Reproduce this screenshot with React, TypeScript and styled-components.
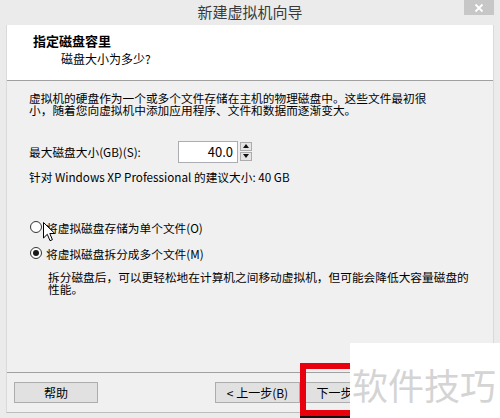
import React from "react";
import styled, { createGlobalStyle } from "styled-components";

const Global = createGlobalStyle`
  html, body { margin: 0; padding: 0; background: #ebebeb; }
  body { font-family: "Noto Sans CJK SC", "Noto Sans", sans-serif; }
`;

const Window = styled.div`
  position: relative;
  width: 500px;
  height: 418px;
  background: #ebebeb;
  display: flex;
  flex-direction: column;
  overflow: hidden;
  color: #000;
  font-family: "Noto Sans CJK SC", "Noto Sans", sans-serif;
  font-size: 12px;
`;

const TitleBar = styled.div`
  height: 25px;
  display: grid;
  grid-template-columns: 1fr auto 1fr;
  align-items: start;
`;

const Title = styled.div`
  grid-column: 2;
  font-size: 15px;
  line-height: 24px;
  color: #3a3a3a;
`;

const CloseButton = styled.div`
  justify-self: end;
  margin-right: 6px;
  width: 30px;
  height: 15px;
  background: #c7c7c7;
  display: flex;
  align-items: center;
  justify-content: center;
`;

const Frame = styled.div`
  margin: 0 6px;
  height: 388px;
  box-sizing: border-box;
  display: flex;
  flex-direction: column;
  border-left: 1px solid #dadada;
  border-right: 1px solid #dadada;
  border-bottom: 1px solid #bdbdbd;
  background: #f0f0f0;
`;

const Header = styled.div`
  height: 56px;
  box-sizing: border-box;
  background: #fff;
  border-bottom: 1px solid #a0a0a0;
  padding: 8px 0 0 26px;
`;

const HeaderTitle = styled.div`
  font-size: 13px;
  font-weight: 700;
  line-height: 16px;
`;

const HeaderSub = styled.div`
  margin: 2px 0 0 28px;
  font-size: 12px;
  line-height: 16px;
`;

const Body = styled.div`
  flex: 1;
  padding: 11px 22px 0 22px;
  display: flex;
  flex-direction: column;
`;

const Text = styled.div<{ $indent?: number; $top?: number }>`
  font-size: 11.7px;
  line-height: 12px;
  white-space: nowrap;
  margin-left: ${(p) => p.$indent ?? 0}px;
  margin-top: ${(p) => p.$top ?? 0}px;
`;

const SizeRow = styled.div`
  margin-top: 24px;
  display: flex;
  align-items: center;
  height: 23px;
`;

const SizeLabel = styled.div`
  width: 149px;
  font-size: 11.7px;
  white-space: nowrap;
`;

const SpinBox = styled.div`
  display: flex;
  align-items: center;
  gap: 2px;
`;

const NumberField = styled.div`
  width: 60px;
  height: 22px;
  box-sizing: border-box;
  border: 1px solid #abadb3;
  background: #fff;
  display: flex;
  align-items: center;
  justify-content: flex-end;
  padding-right: 4px;
  font-size: 13px;
`;

const SpinButtons = styled.div`
  display: flex;
  flex-direction: column;
`;

const SpinButton = styled.div`
  width: 12px;
  height: 9px;
  box-sizing: border-box;
  border: 1px solid #acacac;
  background: #e5e5e5;
  display: flex;
  align-items: center;
  justify-content: center;
  margin-bottom: 1px;
`;

const RadioRow = styled.div<{ $top: number }>`
  margin-top: ${(p) => p.$top}px;
  height: 16px;
  display: flex;
  align-items: center;
  gap: 4px;
  padding-left: 1px;
  font-size: 11.7px;
  white-space: nowrap;
`;

const RadioCircle = styled.span<{ $checked?: boolean }>`
  width: 12px;
  height: 12px;
  box-sizing: border-box;
  border-radius: 50%;
  border: 1px solid #333;
  background: #fff;
  display: flex;
  align-items: center;
  justify-content: center;
  &::after {
    content: "";
    width: 6px;
    height: 6px;
    border-radius: 50%;
    background: ${(p) => (p.$checked ? "#1a1a1a" : "transparent")};
  }
`;

const Footer = styled.div`
  height: 40px;
  box-sizing: border-box;
  border-top: 1px solid #a0a0a0;
  padding: 9px 103px 0 7px;
  display: flex;
  justify-content: space-between;
  align-items: flex-start;
`;

const ButtonGroup = styled.div`
  display: flex;
  gap: 5px;
`;

const Button = styled.div<{ $width?: number }>`
  width: ${(p) => p.$width ?? 85}px;
  height: 21px;
  box-sizing: border-box;
  border: 1px solid #adadad;
  background: #e1e1e1;
  display: flex;
  align-items: center;
  justify-content: center;
  font-size: 12px;
  white-space: nowrap;
`;

const Cursor = styled.svg`
  position: absolute;
  left: 43px;
  top: 222px;
`;

const Highlight = styled.div`
  position: absolute;
  left: 300px;
  top: 363px;
  width: 60px;
  height: 53px;
  box-sizing: border-box;
  border: 6px solid #e8000d;
`;

const BlackStrip = styled.div`
  position: absolute;
  left: 300px;
  top: 416px;
  width: 50px;
  height: 2px;
  background: #111;
`;

const Watermark = styled.div`
  position: absolute;
  left: 350px;
  top: 343px;
  width: 150px;
  height: 75px;
  background: #fff;
  display: flex;
  align-items: center;
  padding: 6px 0 0 2px;
  box-sizing: border-box;
  font-size: 36px;
  color: #d4d4d4;
  white-space: nowrap;
`;

export default function App() {
  return (
    <>
      <Global />
      <Window>
        <TitleBar>
          <Title>新建虚拟机向导</Title>
          <CloseButton>
            <svg width="10" height="10" viewBox="0 0 10 10">
              <path d="M1.5 1.5 L8.5 8.5 M8.5 1.5 L1.5 8.5" stroke="#fff" strokeWidth="1.8" />
            </svg>
          </CloseButton>
        </TitleBar>
        <Frame>
          <Header>
            <HeaderTitle>指定磁盘容里</HeaderTitle>
            <HeaderSub>磁盘大小为多少?</HeaderSub>
          </Header>
          <Body>
            <Text>虚拟机的硬盘作为一个或多个文件存储在主机的物理磁盘中。这些文件最初很</Text>
            <Text>小，随着您向虚拟机中添加应用程序、文件和数据而逐渐变大。</Text>
            <SizeRow>
              <SizeLabel>最大磁盘大小(GB)(S):</SizeLabel>
              <SpinBox>
                <NumberField>40.0</NumberField>
                <SpinButtons>
                  <SpinButton>
                    <svg width="6" height="4" viewBox="0 0 6 4">
                      <path d="M0 4 L3 0 L6 4 Z" fill="#111" />
                    </svg>
                  </SpinButton>
                  <SpinButton>
                    <svg width="6" height="4" viewBox="0 0 6 4">
                      <path d="M0 0 L6 0 L3 4 Z" fill="#111" />
                    </svg>
                  </SpinButton>
                </SpinButtons>
              </SpinBox>
            </SizeRow>
            <Text $top={8}>针对 Windows XP Professional 的建议大小: 40 GB</Text>
            <RadioRow $top={36}>
              <RadioCircle />
              将虚拟磁盘存储为单个文件(O)
            </RadioRow>
            <RadioRow $top={10}>
              <RadioCircle $checked />
              将虚拟磁盘拆分成多个文件(M)
            </RadioRow>
            <Text $indent={19} $top={10}>
              拆分磁盘后，可以更轻松地在计算机之间移动虚拟机，但可能会降低大容量磁盘的
            </Text>
            <Text $indent={19}>性能。</Text>
          </Body>
          <Footer>
            <Button $width={84}>帮助</Button>
            <ButtonGroup>
              <Button>&lt; 上一步(B)</Button>
              <Button>下一步(N) &gt;</Button>
            </ButtonGroup>
          </Footer>
        </Frame>
        <Cursor width="13" height="20" viewBox="0 0 13 20">
          <path
            d="M0.5 0.5 L0.5 16 L4.3 12.3 L7 18.7 L9.4 17.7 L6.8 11.5 L11.8 11.5 Z"
            fill="#fff"
            stroke="#000"
            strokeWidth="1"
            strokeLinejoin="round"
          />
        </Cursor>
        <Highlight />
        <BlackStrip />
        <Watermark>软件技巧</Watermark>
      </Window>
    </>
  );
}
